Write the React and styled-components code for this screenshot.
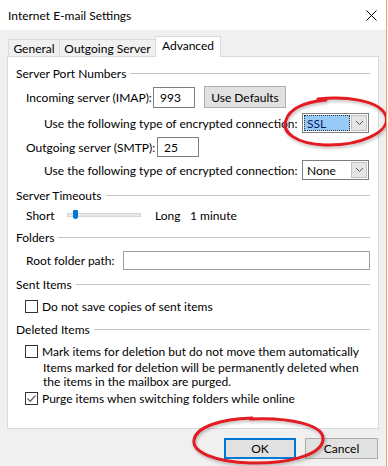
import React from 'react';
import styled, { createGlobalStyle } from 'styled-components';

const GlobalStyle = createGlobalStyle`
  html, body { margin: 0; padding: 0; background: #fff; }
  body {
    font-family: Lato, 'Noto Sans', sans-serif;
    font-size: 12px;
    color: #000;
  }
  * { box-sizing: border-box; }
`;

const Window = styled.div`
  position: relative;
  width: 387px;
  height: 466px;
  border-right: 1px solid #eaa35c;
  display: flex;
  flex-direction: column;
  background: #f0f0f0;
  overflow: hidden;
`;

const TitleBar = styled.div`
  height: 30px;
  background: #fff;
  display: flex;
  align-items: center;
  justify-content: space-between;
  padding: 0 9px 0 8px;
`;

const Body = styled.div`
  flex: 1;
  padding: 6px 7px 0 7px;
  display: flex;
  flex-direction: column;
`;

const TabRow = styled.div`
  height: 20px;
  display: flex;
  align-items: flex-end;
  padding-left: 1px;
`;

const Tab = styled.div`
  position: relative;
  z-index: ${(p) => (p.$active ? 2 : 1)};
  width: ${(p) => p.$w}px;
  height: ${(p) => (p.$active ? 21 : 17)}px;
  margin-left: ${(p) => (p.$first ? 0 : -1)}px;
  margin-bottom: ${(p) => (p.$active ? -1 : 0)}px;
  padding-bottom: ${(p) => (p.$active ? 3 : 0)}px;
  background: ${(p) => (p.$active ? '#fff' : '#f0f0f0')};
  border: 1px solid #d9d9d9;
  border-bottom: none;
  display: flex;
  align-items: center;
  justify-content: center;
  white-space: nowrap;
`;

const Panel = styled.div`
  width: 372px;
  height: 373px;
  background: #fff;
  border: 1px solid #d9d9d9;
  padding: 8px 8px 0 8px;
  display: flex;
  flex-direction: column;
`;

const Legend = styled.div`
  height: 16px;
  margin-top: ${(p) => p.$mt || 0}px;
  display: flex;
  align-items: center;
  gap: 4px;
  white-space: nowrap;
  &::after {
    content: '';
    flex: 1;
    height: 1px;
    background: #c4c4c4;
  }
`;

const Row = styled.div`
  height: ${(p) => p.$h}px;
  margin-top: ${(p) => p.$mt || 0}px;
  padding-left: ${(p) => p.$indent || 10}px;
  display: flex;
  align-items: center;
  white-space: nowrap;
`;

const Label = styled.span`
  width: ${(p) => (p.$w ? `${p.$w}px` : 'auto')};
  flex: none;
`;

const TextBox = styled.div`
  width: ${(p) => p.$w}px;
  height: ${(p) => p.$h || 21}px;
  border: 1px solid ${(p) => p.$border || '#7f7f7f'};
  background: #fff;
  padding-left: 6px;
  display: flex;
  align-items: center;
`;

const Button = styled.div`
  width: ${(p) => p.$w}px;
  height: ${(p) => p.$h || 21}px;
  margin-left: ${(p) => p.$ml || 0}px;
  background: #e1e1e1;
  border: ${(p) => (p.$default ? '2px solid #0078d7' : '1px solid #adadad')};
  display: flex;
  align-items: center;
  justify-content: center;
`;

const Select = styled.div`
  width: 67px;
  height: 20px;
  border: 1px solid #7f7f7f;
  background: #fff;
  padding: 1px;
  display: flex;
  gap: 1px;
`;

const SelectValue = styled.div`
  flex: 1;
  display: flex;
  align-items: center;
  padding-left: 3px;
  background: ${(p) => (p.$focused ? '#99c9f7' : 'transparent')};
  outline: ${(p) => (p.$focused ? '1px dotted #333' : 'none')};
  outline-offset: -1px;
  color: ${(p) => (p.$focused ? '#001a66' : '#000')};
`;

const SelectArrow = styled.div`
  width: 16px;
  background: #e5e5e5;
  border: 1px solid #c2c2c2;
  display: flex;
  align-items: center;
  justify-content: center;
`;

const Track = styled.div`
  position: relative;
  width: 74px;
  height: 4px;
  margin-right: 14px;
  background: #e7e7e7;
  border: 1px solid #d6d6d6;
`;

const Thumb = styled.div`
  position: absolute;
  left: 5px;
  top: -4px;
  width: 5px;
  height: 9px;
  background: #0078d7;
  border-radius: 1px 1px 3px 3px;
`;

const Box = styled.div`
  width: 13px;
  height: 13px;
  border: 1px solid #333;
  background: #fff;
  margin-right: 4px;
  flex: none;
  display: flex;
  align-items: center;
  justify-content: center;
`;

const Note = styled.div`
  margin-top: 2px;
  padding-left: 27px;
  line-height: 14px;
  white-space: nowrap;
`;

const Footer = styled.div`
  margin-top: 9px;
  display: flex;
  justify-content: flex-end;
  gap: 9px;
  padding-right: 1px;
`;

const Overlay = styled.svg`
  position: absolute;
  left: 0;
  top: 0;
  pointer-events: none;
`;

const Chevron = () => (
  <svg width="9" height="6" viewBox="0 0 9 6">
    <path d="M1 1 L4.5 4.5 L8 1" fill="none" stroke="#555" strokeWidth="1" />
  </svg>
);

const Check = ({ checked }) => (
  <Box>
    {checked && (
      <svg width="11" height="11" viewBox="0 0 11 11">
        <path d="M1.5 5.5 L4.2 8.3 L9.5 2.5" fill="none" stroke="#666" strokeWidth="1.3" />
      </svg>
    )}
  </Box>
);

const App = () => (
  <>
    <GlobalStyle />
    <Window>
      <TitleBar>
        <span>Internet E-mail Settings</span>
        <svg width="11" height="11" viewBox="0 0 11 11">
          <path d="M0.5 0.5 L10.5 10.5 M10.5 0.5 L0.5 10.5" stroke="#000" strokeWidth="1" />
        </svg>
      </TitleBar>
      <Body>
        <TabRow>
          <Tab $w={52} $first>General</Tab>
          <Tab $w={97}>Outgoing Server</Tab>
          <Tab $w={66} $active>Advanced</Tab>
        </TabRow>
        <Panel>
          <Legend>Server Port Numbers</Legend>
          <Row $h={24} $mt={4}>
            <Label $w={127}>Incoming server (IMAP):</Label>
            <TextBox $w={42}>993</TextBox>
            <Button $w={82} $h={22} $ml={9}>Use Defaults</Button>
          </Row>
          <Row $h={20} $mt={4} $indent={28}>
            <Label $w={258}>Use the following type of encrypted connection:</Label>
            <Select>
              <SelectValue $focused>SSL</SelectValue>
              <SelectArrow><Chevron /></SelectArrow>
            </Select>
          </Row>
          <Row $h={20} $mt={4}>
            <Label $w={131}>Outgoing server (SMTP):</Label>
            <TextBox $w={42} $h={20}>25</TextBox>
          </Row>
          <Row $h={20} $mt={3} $indent={28}>
            <Label $w={258}>Use the following type of encrypted connection:</Label>
            <Select>
              <SelectValue>None</SelectValue>
              <SelectArrow><Chevron /></SelectArrow>
            </Select>
          </Row>

          <Legend $mt={7}>Server Timeouts</Legend>
          <Row $h={16} $mt={4}>
            <Label $w={41}>Short</Label>
            <Track><Thumb /></Track>
            <Label $w={35}>Long</Label>
            <Label>1 minute</Label>
          </Row>

          <Legend $mt={6}>Folders</Legend>
          <Row $h={20} $mt={5}>
            <Label $w={97}>Root folder path:</Label>
            <TextBox $w={247} $h={19} $border="#a0a0a0" />
          </Row>

          <Legend $mt={6}>Sent Items</Legend>
          <Row $h={16} $mt={6} $indent={9}>
            <Check />
            <span>Do not save copies of sent items</span>
          </Row>

          <Legend $mt={7}>Deleted Items</Legend>
          <Row $h={16} $mt={6} $indent={9}>
            <Check />
            <span>Mark items for deletion but do not move them automatically</span>
          </Row>
          <Note>
            Items marked for deletion will be permanently deleted when
            <br />
            the items in the mailbox are purged.
          </Note>
          <Row $h={16} $mt={1} $indent={9}>
            <Check checked />
            <span>Purge items when switching folders while online</span>
          </Row>
        </Panel>
        <Footer>
          <Button $w={72} $h={21} $default>OK</Button>
          <Button $w={73} $h={21}>Cancel</Button>
        </Footer>
      </Body>

      <Overlay width="388" height="466" viewBox="0 0 388 466">
        <defs>
          <filter id="ink" x="-10%" y="-20%" width="120%" height="140%">
            <feDropShadow dx="1" dy="2" stdDeviation="1.5" floodColor="#000" floodOpacity="0.25" />
          </filter>
        </defs>
        <g fill="none" stroke="#e11b22" strokeLinecap="round" filter="url(#ink)">
          <path
            d="M318 99 C345 96 380 100 386 116 C391 132 360 146 325 145 C296 144 281 132 286 120 C290 108 305 102 326 100"
            strokeWidth="3"
          />
          <path
            d="M250 419 C290 417 325 425 323 440 C321 456 285 464 250 463 C215 462 192 452 194 440 C196 427 220 419 252 418"
            strokeWidth="3"
          />
        </g>
      </Overlay>
    </Window>
  </>
);

export default App;
